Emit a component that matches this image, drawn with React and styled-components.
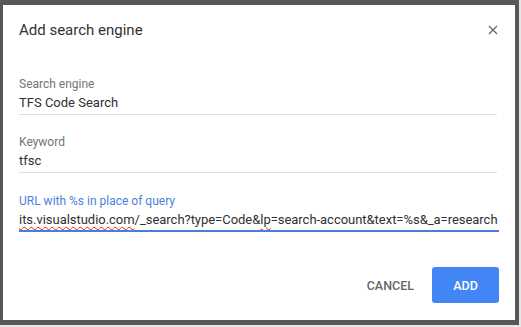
import React from "react";
import styled, { createGlobalStyle } from "styled-components";

const Global = createGlobalStyle`
  html, body { margin: 0; padding: 0; }
  body {
    background: #e6e6e6;
    font-family: Roboto, "Liberation Sans", Arial, sans-serif;
    width: 521px;
    height: 327px;
    overflow: hidden;
  }
`;

const Backdrop = styled.div`
  box-sizing: border-box;
  width: 519px;
  height: 325px;
  background: #585858;
  padding: 5px 4px 5px 3px;
`;

const Dialog = styled.div`
  box-sizing: border-box;
  height: 100%;
  background: #fff;
  display: flex;
  flex-direction: column;
  padding: 15px 16px 17px 16px;
`;

const Header = styled.div`
  display: flex;
  align-items: center;
  justify-content: space-between;
  height: 20px;
`;

const Title = styled.h1`
  margin: 0;
  font-size: 15px;
  line-height: 20px;
  font-weight: 400;
  color: #333;
`;

const CloseButton = styled.button`
  width: 20px;
  height: 20px;
  margin-right: -4px;
  padding: 0;
  border: 0;
  background: none;
  display: flex;
  align-items: center;
  justify-content: center;
  cursor: pointer;
`;

const Fields = styled.div`
  display: flex;
  flex-direction: column;
  gap: 19.5px;
  margin-top: 35.5px;
`;

const Field = styled.div`
  display: flex;
  flex-direction: column;
`;

const Label = styled.label`
  font-size: 12px;
  line-height: 16px;
  color: ${(p) => (p.$focused ? "#4a82d8" : "#757575")};
`;

const Input = styled.div`
  margin-top: 1px;
  padding-bottom: ${(p) => (p.$focused ? "0" : "1px")};
  font-size: 13px;
  line-height: 20px;
  color: #303030;
  white-space: nowrap;
  overflow: hidden;
  letter-spacing: ${(p) => (p.$focused ? "-0.03px" : "0")};
  border-bottom: ${(p) => (p.$focused ? "2px solid #4a7fd0" : "1px solid #e0e0e0")};
  margin-right: ${(p) => (p.$focused ? "0" : "2px")};
`;

const Misspelled = styled.span`
  text-decoration: underline wavy #e02020;
  text-decoration-thickness: 1px;
  text-underline-offset: 2px;
`;

const Footer = styled.div`
  margin-top: auto;
  display: flex;
  justify-content: flex-end;
  align-items: center;
`;

const Button = styled.button`
  height: 36px;
  border: 0;
  border-radius: 3px;
  font-family: Roboto, "Liberation Sans", Arial, sans-serif;
  font-size: 12.5px;
  font-weight: 500;
  letter-spacing: 0;
  cursor: pointer;
  padding: 0 ${(p) => (p.$primary ? "21px" : "18px")};
  min-width: ${(p) => (p.$primary ? "67px" : "auto")};
  background: ${(p) => (p.$primary ? "#4285f4" : "transparent")};
  color: ${(p) => (p.$primary ? "#fff" : "#666")};
`;

export default function App() {
  return (
    <>
      <Global />
      <Backdrop>
        <Dialog>
          <Header>
            <Title>Add search engine</Title>
            <CloseButton aria-label="Close">
              <svg width="10" height="10" viewBox="0 0 10 10">
                <path d="M1 1L9 9M9 1L1 9" stroke="#666" strokeWidth="1.3" fill="none" />
              </svg>
            </CloseButton>
          </Header>
          <Fields>
            <Field>
              <Label>Search engine</Label>
              <Input>TFS Code Search</Input>
            </Field>
            <Field>
              <Label>Keyword</Label>
              <Input>tfsc</Input>
            </Field>
            <Field>
              <Label $focused>URL with %s in place of query</Label>
              <Input $focused>
                <Misspelled>its.visualstudio.com</Misspelled>/_search?type=Code&amp;
                <Misspelled>lp</Misspelled>=search-account&amp;text=%s&amp;_a=research
              </Input>
            </Field>
          </Fields>
          <Footer>
            <Button>CANCEL</Button>
            <Button $primary>ADD</Button>
          </Footer>
        </Dialog>
      </Backdrop>
    </>
  );
}
